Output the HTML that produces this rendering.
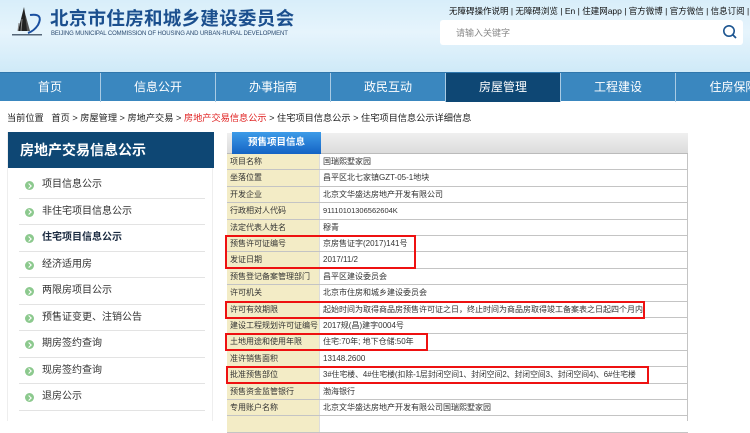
<!DOCTYPE html>
<html><head><meta charset="utf-8"><style>
*{margin:0;padding:0;box-sizing:border-box}
body{width:750px;height:421px;overflow:hidden;background:#fff;font-family:"Liberation Sans","Noto Sans CJK SC",sans-serif;position:relative}
.a{position:absolute;white-space:nowrap}
#hdr{left:0;top:0;width:750px;height:72px;background:linear-gradient(180deg,#d8eefa 0%,#e6f4fc 45%,#cfeaf8 100%)}
#nav{left:0;top:72px;width:750px;height:29px;background:#3a87bf;border-top:1px solid #2f77ad}
.ni{position:absolute;top:0;height:29px;line-height:29px;color:#fff;font-size:12px;text-align:center;border-right:1px solid #a9cbe4}
#side{left:7px;top:132px;width:206px;height:289px;background:#fff;border-left:1px solid #eee;border-right:1px solid #eee}
.sh{position:absolute;left:0;top:0;width:206px;height:36px;background:#0e4774;color:#fff;font-size:14px;font-weight:bold;line-height:36px;padding-left:12px}
.si{position:absolute;left:11px;width:186px;height:26.5px;border-bottom:1px solid #e3e3e3;font-size:10px;color:#333;line-height:26px;padding-left:23px}
.si:before{content:"";position:absolute;left:6px;top:9px;width:9px;height:9px;border-radius:50%;background:#8cc98e}
.si:after{content:"";position:absolute;left:8px;top:11.5px;width:3px;height:3px;border-right:1px solid #fff;border-top:1px solid #fff;transform:rotate(45deg)}
.row{position:absolute;left:227px;width:461px;height:16.4px;border-bottom:1px solid #c4c4c4;font-size:8px;line-height:16px;color:#333;white-space:nowrap}
.row .l{position:absolute;left:0;top:0;width:93px;height:15.4px;background:#f3ecc6;padding-left:3px;border-right:1px solid #ddd}
.row .v{position:absolute;left:96px;top:0}
.rb{position:absolute;border:2px solid #ee1111;z-index:5}
</style></head><body>
<div class="a" id="hdr"></div>
<svg class="a" style="left:8px;top:3px" width="40" height="36" viewBox="0 0 40 36">
<path d="M16 4 L20 28 L10 28 Z" fill="#222"/><path d="M17 10 L22 28 L19 28 Z" fill="#555"/>
<path d="M14 16 L13 28 M11 20 L10 28" stroke="#888" stroke-width="1"/>
<path d="M22 12 Q36 10 30 22 Q26 28 20 30" stroke="#1a4fa0" stroke-width="2" fill="none"/>
<rect x="4" y="31" width="30" height="1.5" fill="#567"/></svg>
<div class="a" style="left:50px;top:5px;font-size:18.5px;font-weight:bold;color:#1b4f8e;letter-spacing:0.3px">北京市住房和城乡建设委员会</div>
<div class="a" style="left:51px;top:31px;font-size:6px;color:#2a4a70;letter-spacing:-0.1px">BEIJING MUNICIPAL COMMISSION OF HOUSING AND URBAN-RURAL DEVELOPMENT</div>
<div class="a" style="left:449px;top:5px;font-size:8.5px;color:#111">无障碍操作说明 | 无障碍浏览 | En | 住建网app | 官方微博 | 官方微信 | 信息订阅 | 旧版回顾</div>
<div class="a" style="left:440px;top:20px;width:303px;height:25px;background:#fff;border-radius:3px"></div>
<div class="a" style="left:456px;top:26px;font-size:9px;color:#888">请输入关键字</div>
<svg class="a" style="left:722px;top:24px" width="16" height="16" viewBox="0 0 16 16"><circle cx="7" cy="7" r="5.2" stroke="#1d5590" stroke-width="1.6" fill="none"/><path d="M10.5 10.5 L14 14" stroke="#1d5590" stroke-width="1.8"/></svg>
<div class="a" id="nav">
<div class="ni" style="left:0;width:101px">首页</div>
<div class="ni" style="left:101px;width:115px">信息公开</div>
<div class="ni" style="left:216px;width:115px">办事指南</div>
<div class="ni" style="left:331px;width:115px">政民互动</div>
<div class="ni" style="left:446px;width:115px;background:#0e4774">房屋管理</div>
<div class="ni" style="left:561px;width:115px">工程建设</div>
<div class="ni" style="left:676px;width:115px;border:none">住房保障</div>
</div>
<div class="a" style="left:7px;top:110px;font-size:9.2px;color:#222">当前位置&nbsp;&nbsp; 首页 &gt; 房屋管理 &gt; 房地产交易 &gt; <span style="color:#e02020">房地产交易信息公示</span> &gt; 住宅项目信息公示 &gt; 住宅项目信息公示详细信息</div>
<div class="a" id="side">
<div class="sh">房地产交易信息公示</div>
<div class="si" style="top:40px">项目信息公示</div>
<div class="si" style="top:66.5px">非住宅项目信息公示</div>
<div class="si" style="top:93px;font-weight:bold;color:#1a2a40">住宅项目信息公示</div>
<div class="si" style="top:119.5px">经济适用房</div>
<div class="si" style="top:146px">两限房项目公示</div>
<div class="si" style="top:172.5px">预售证变更、注销公告</div>
<div class="si" style="top:199px">期房签约查询</div>
<div class="si" style="top:225.5px">现房签约查询</div>
<div class="si" style="top:252px">退房公示</div>
</div>
<div class="a" style="left:227px;top:133px;width:461px;height:21px;background:linear-gradient(#f0f0f0,#dcdcdc);border-bottom:1px solid #bbb"></div>
<div class="a" style="left:232px;top:132px;width:89px;height:22px;background:linear-gradient(#3d9be8,#1463c4);color:#fff;font-size:9.5px;font-weight:bold;line-height:22px;text-align:center">预售项目信息</div>
<div class="a" style="left:687px;top:154px;width:1px;height:267px;background:#c4c4c4"></div>
<div class="row" style="top:154px"><div class="l">项目名称</div><div class="v">国瑞熙墅家园</div></div>
<div class="row" style="top:170.4px"><div class="l">坐落位置</div><div class="v">昌平区北七家镇GZT-05-1地块</div></div>
<div class="row" style="top:186.8px"><div class="l">开发企业</div><div class="v">北京文华盛达房地产开发有限公司</div></div>
<div class="row" style="top:203.2px"><div class="l">行政相对人代码</div><div class="v" style="font-size:7.5px">91110101306562604K</div></div>
<div class="row" style="top:219.6px"><div class="l">法定代表人姓名</div><div class="v">穆青</div></div>
<div class="row" style="top:236px"><div class="l">预售许可证编号</div><div class="v">京房售证字(2017)141号</div></div>
<div class="row" style="top:252.4px"><div class="l">发证日期</div><div class="v">2017/11/2</div></div>
<div class="row" style="top:268.8px"><div class="l">预售登记备案管理部门</div><div class="v">昌平区建设委员会</div></div>
<div class="row" style="top:285.2px"><div class="l">许可机关</div><div class="v">北京市住房和城乡建设委员会</div></div>
<div class="row" style="top:301.6px"><div class="l">许可有效期限</div><div class="v">起始时间为取得商品房预售许可证之日，终止时间为商品房取得竣工备案表之日起四个月内</div></div>
<div class="row" style="top:318px"><div class="l">建设工程规划许可证编号</div><div class="v">2017规(昌)建字0004号</div></div>
<div class="row" style="top:334.4px"><div class="l">土地用途和使用年限</div><div class="v">住宅:70年; 地下仓储:50年</div></div>
<div class="row" style="top:350.8px"><div class="l">准许销售面积</div><div class="v">13148.2600</div></div>
<div class="row" style="top:367.2px"><div class="l">批准预售部位</div><div class="v" style="font-size:7.8px">3#住宅楼、4#住宅楼(扣除-1层封闭空间1、封闭空间2、封闭空间3、封闭空间4)、6#住宅楼</div></div>
<div class="row" style="top:383.6px"><div class="l">预售资金监管银行</div><div class="v">渤海银行</div></div>
<div class="row" style="top:400px"><div class="l">专用账户名称</div><div class="v">北京文华盛达房地产开发有限公司国瑞熙墅家园</div></div>
<div class="row" style="top:416.4px"><div class="l"></div></div>
<div class="rb" style="left:225px;top:235px;width:191px;height:34px"></div>
<div class="rb" style="left:225px;top:301px;width:420px;height:18px"></div>
<div class="rb" style="left:225px;top:333px;width:203px;height:18px"></div>
<div class="rb" style="left:226px;top:366px;width:423px;height:18px"></div>
</body></html>
